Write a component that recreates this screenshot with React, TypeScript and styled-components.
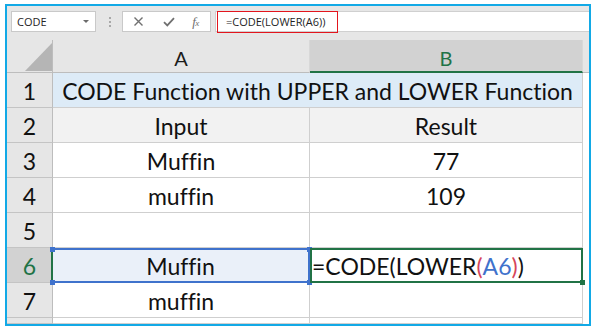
import React from 'react';
import styled, { createGlobalStyle } from 'styled-components';

const Global = createGlobalStyle`
  html, body { margin: 0; padding: 0; background: #ffffff; }
  body { width: 598px; height: 333px; overflow: hidden; }
  * { box-sizing: border-box; }
`;

const Page = styled.div`
  width: 598px;
  height: 333px;
  padding: 4px 0 0 5px;
  background: #ffffff;
`;

const Frame = styled.div`
  width: 586px;
  height: 322px;
  border: 2px solid #12a9e6;
  background: #e6e6e6;
  display: flex;
  flex-direction: column;
  overflow: hidden;
`;

const FormulaBar = styled.div`
  height: 34px;
  flex: none;
  display: flex;
  align-items: flex-start;
  padding: 5px 0 0 4px;
  font-family: 'Open Sans', 'Noto Sans', sans-serif;
  font-size: 11px;
  color: #262626;
`;

const NameBox = styled.div`
  width: 85px;
  height: 21px;
  background: #ffffff;
  border: 1px solid #c9c9c9;
  display: flex;
  align-items: center;
  justify-content: space-between;
  padding: 0 6px 0 5px;
`;

const Caret = styled.span`
  width: 0;
  height: 0;
  border-left: 3px solid transparent;
  border-right: 3px solid transparent;
  border-top: 3px solid #6b6b6b;
`;

const Grip = styled.div`
  width: 26px;
  height: 21px;
  display: flex;
  flex-direction: column;
  align-items: center;
  justify-content: center;
  gap: 2px;
  padding-left: 1px;
`;

const Dot = styled.span`
  width: 2px;
  height: 2px;
  background: #a8a8a8;
`;

const ButtonBox = styled.div`
  width: 89px;
  height: 21px;
  background: #ffffff;
  border: 1px solid #c9c9c9;
  display: grid;
  grid-template-columns: 31px 30px 1fr;
  align-items: center;
  justify-items: center;
`;

const Fx = styled.span`
  font-family: 'Liberation Serif', serif;
  font-style: italic;
  font-size: 13px;
  color: #6e6e6e;
  margin-left: -3px;
  letter-spacing: -0.5px;
  & small { font-size: 9px; }
`;

const FormulaInput = styled.div`
  flex: 1;
  height: 21px;
  margin-left: 4px;
  background: #ffffff;
  border: 1px solid #d0d0d0;
  border-right: none;
  padding-left: 1px;
`;

const Annotation = styled.div`
  width: 121px;
  height: 22px;
  margin-top: -1px;
  border: 1px solid #e3151d;
  display: flex;
  align-items: center;
  padding: 0 0 1px 8px;
  color: #1f1f1f;
`;

const Grid = styled.div`
  flex: 1;
  display: grid;
  grid-template-columns: 46px 257px 273px 1fr;
  grid-template-rows: 33px repeat(7, 35px) 1fr;
  background: #ffffff;
  font-family: Lato, 'Open Sans', sans-serif;
  font-variant-ligatures: none;
  color: #111111;
`;

const Corner = styled.div`
  background: #e6e6e6;
  border-right: 1px solid #bdbdbd;
  border-bottom: 1px solid #bdbdbd;
  display: flex;
  align-items: flex-end;
  justify-content: flex-end;
  padding: 0 0 1px 0;
`;

const ColHeader = styled.div<{ $active?: boolean }>`
  background: ${p => (p.$active ? '#d2d2d2' : '#e6e6e6')};
  color: ${p => (p.$active ? '#217346' : '#1c1c1c')};
  border-right: 1px solid #d8d8d8;
  border-bottom: ${p => (p.$active ? '2px solid #217346' : '1px solid #bdbdbd')};
  display: flex;
  align-items: flex-end;
  justify-content: center;
  font-size: 20px;
  line-height: 24px;
  padding-bottom: ${p => (p.$active ? '1px' : '2px')};
`;

const HeaderFill = styled.div`
  background: #e6e6e6;
  border-bottom: 1px solid #bdbdbd;
`;

const RowHeader = styled.div<{ $active?: boolean }>`
  background: ${p => (p.$active ? '#d2d2d2' : '#e6e6e6')};
  color: ${p => (p.$active ? '#217346' : '#111111')};
  border-right: ${p => (p.$active ? '2px solid #217346' : '1px solid #bdbdbd')};
  border-bottom: 1px solid #c4c4c4;
  display: flex;
  align-items: center;
  justify-content: center;
  font-size: 23px;
  line-height: 27px;
  padding: 2px 0 0 ${p => (p.$active ? '1px' : '0')};
`;

const Cell = styled.div<{ $fill?: string; $span?: number }>`
  grid-column: ${p => (p.$span ? `span ${p.$span}` : 'auto')};
  background: ${p => p.$fill || '#ffffff'};
  border-right: 1px solid #cfcfcf;
  border-bottom: 1px solid #cfcfcf;
  display: flex;
  align-items: center;
  justify-content: center;
  font-size: 23px;
  line-height: 27px;
  padding-top: 2px;
  white-space: nowrap;
`;

const RefCell = styled(Cell)`
  position: relative;
  background: #eaf0f9;
  border-top: 2px solid #3f72cc;
  border-bottom: 2px solid #3f72cc;
  border-right: 2px solid #3f72cc;
`;

const ActiveCell = styled(Cell)`
  position: relative;
  justify-content: flex-start;
  border: 2px solid #217346;
  padding-left: 0;
`;

const Handle = styled.span<{ $color: string; $top?: boolean; $left?: boolean }>`
  position: absolute;
  width: 5px;
  height: 5px;
  background: ${p => p.$color};
  ${p => (p.$top ? 'top: -3px;' : 'bottom: -4px;')}
  ${p => (p.$left ? 'left: -3px;' : 'right: -4px;')}
`;

const Fill = styled.div<{ $header?: boolean }>`
  background: ${p => (p.$header ? '#e6e6e6' : '#ffffff')};
`;

const Paren = styled.span`
  color: #d6455a;
`;

const Ref = styled.span`
  color: #3f72cc;
`;

const CloseIcon = () => (
  <svg width="11" height="11" viewBox="0 0 11 11">
    <path d="M1.5 1.5 L9.5 9.5 M9.5 1.5 L1.5 9.5" stroke="#707070" strokeWidth="1.4" fill="none" />
  </svg>
);

const CheckIcon = () => (
  <svg width="12" height="10" viewBox="0 0 12 10">
    <path d="M1 5.2 L4.3 8.4 L11 1.2" stroke="#707070" strokeWidth="1.8" fill="none" />
  </svg>
);

const Triangle = () => (
  <svg width="27" height="28" viewBox="0 0 27 28">
    <polygon points="27,0 27,28 0,28" fill="#b5b5b5" />
  </svg>
);

const rows: [string, string][] = [
  ['Muffin', '77'],
  ['muffin', '109'],
  ['', ''],
];

export default function App() {
  return (
    <>
      <Global />
      <Page>
        <Frame>
          <FormulaBar>
            <NameBox>
              <span>CODE</span>
              <Caret />
            </NameBox>
            <Grip>
              <Dot />
              <Dot />
              <Dot />
            </Grip>
            <ButtonBox>
              <CloseIcon />
              <CheckIcon />
              <Fx>
                f<small>x</small>
              </Fx>
            </ButtonBox>
            <FormulaInput>
              <Annotation>=CODE(LOWER(A6))</Annotation>
            </FormulaInput>
          </FormulaBar>
          <Grid>
            <Corner>
              <Triangle />
            </Corner>
            <ColHeader>A</ColHeader>
            <ColHeader $active>B</ColHeader>
            <HeaderFill />

            <RowHeader>1</RowHeader>
            <Cell $span={2} $fill="#ddebf7">
              CODE Function with UPPER and LOWER Function
            </Cell>
            <Fill />

            <RowHeader>2</RowHeader>
            <Cell $fill="#f2f2f2">Input</Cell>
            <Cell $fill="#f2f2f2">Result</Cell>
            <Fill />

            {rows.map(([a, b], i) => (
              <React.Fragment key={i}>
                <RowHeader>{i + 3}</RowHeader>
                <Cell>{a}</Cell>
                <Cell>{b}</Cell>
                <Fill />
              </React.Fragment>
            ))}

            <RowHeader $active>6</RowHeader>
            <RefCell>
              Muffin
              <Handle $color="#3f72cc" $top $left />
              <Handle $color="#3f72cc" $left />
              <Handle $color="#3f72cc" $top />
              <Handle $color="#3f72cc" />
            </RefCell>
            <ActiveCell>
              =CODE(LOWER<Paren>(</Paren>
              <Ref>A6</Ref>
              <Paren>)</Paren>)
              <Handle $color="#217346" />
            </ActiveCell>
            <Fill />

            <RowHeader>7</RowHeader>
            <Cell>muffin</Cell>
            <Cell />
            <Fill />

            <RowHeader />
            <Cell />
            <Cell />
            <Fill />
          </Grid>
        </Frame>
      </Page>
    </>
  );
}
